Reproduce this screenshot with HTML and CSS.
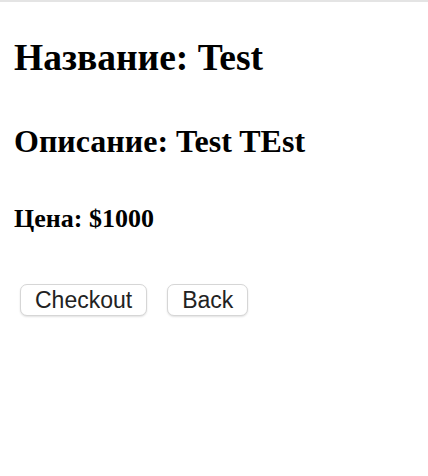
FILE: index.html
```html
<!DOCTYPE html>
<html>
<head>
<meta charset="utf-8">
<link rel="stylesheet" href="styles.css">
</head>
<body>
<div class="topline"></div>
<main class="product">
  <h1 class="title">Название: Test</h1>
  <h2 class="desc">Описание: Test TEst</h2>
  <h3 class="price">Цена: $1000</h3>
  <div class="actions">
    <button class="btn">Checkout</button>
    <button class="btn">Back</button>
  </div>
</main>
</body>
</html>
```
FILE: styles.css
```css
html, body {
  margin: 0;
  padding: 0;
  background: #fff;
}
body {
  font-family: "Liberation Serif", "Times New Roman", serif;
  color: #000;
}
.topline {
  height: 2px;
  background: #e4e4e4;
}
.product {
  display: flex;
  flex-direction: column;
  align-items: flex-start;
  padding: 10px 9px 9px 14px;
}
.title {
  font-size: 37.5px;
  font-weight: bold;
  margin: 24px 0;
}
.desc {
  font-size: 32px;
  font-weight: bold;
  margin: 20px 0;
}
.price {
  font-size: 26px;
  font-weight: bold;
  margin: 24px 0 20px;
}
.actions {
  display: flex;
  gap: 20px;
  margin-top: 30px;
  padding-left: 6px;
}
.btn {
  font-family: "Liberation Sans", Arial, sans-serif;
  font-size: 23px;
  color: #222;
  background: #fff;
  border: 1px solid #d6d6d6;
  border-radius: 7px;
  box-shadow: 0 1px 2px rgba(0,0,0,0.12);
  height: 32px;
  padding: 0 14px;
  line-height: 30px;
}
```
